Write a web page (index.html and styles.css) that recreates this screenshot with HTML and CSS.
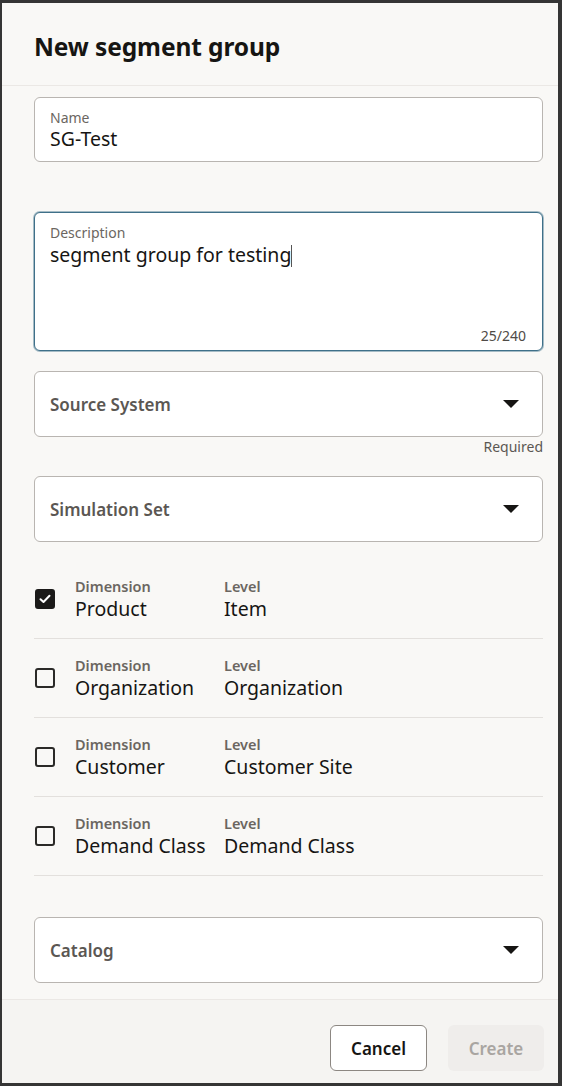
FILE: index.html
```html
<!DOCTYPE html>
<html>
<head>
  <meta charset="UTF-8">
  <link rel="stylesheet" href="styles.css">
</head>
<body>
  <div class="dialog">
    <div class="dialog-head">
      <h1 class="dialog-title">New segment group</h1>
    </div>

    <div class="dialog-body">
      <div class="field">
        <div class="field-label">Name</div>
        <div class="field-value">SG-Test</div>
      </div>

      <div class="field field-area">
        <div class="field-label">Description</div>
        <div class="field-value">segment group for testing<span class="caret"></span></div>
        <div class="counter">25/240</div>
      </div>

      <div class="select">
        <span class="select-text">Source System</span>
        <svg class="arrow" width="16" height="8" viewBox="0 0 16 8"><path d="M0 0 L16 0 L8 8 Z" fill="#161513"/></svg>
      </div>
      <div class="required">Required</div>

      <div class="select select-sim">
        <span class="select-text">Simulation Set</span>
        <svg class="arrow" width="16" height="8" viewBox="0 0 16 8"><path d="M0 0 L16 0 L8 8 Z" fill="#161513"/></svg>
      </div>

      <div class="dims">
        <div class="dim-row">
          <span class="check checked">
            <svg width="12" height="10" viewBox="0 0 12 10"><path d="M1.5 5.2 L4.5 8 L10.5 1.8" fill="none" stroke="#fff" stroke-width="2" stroke-linecap="round" stroke-linejoin="round"/></svg>
          </span>
          <div class="dim-col">
            <div class="dim-label">Dimension</div>
            <div class="dim-value">Product</div>
          </div>
          <div class="dim-col">
            <div class="dim-label">Level</div>
            <div class="dim-value">Item</div>
          </div>
        </div>
        <div class="dim-row">
          <span class="check"></span>
          <div class="dim-col">
            <div class="dim-label">Dimension</div>
            <div class="dim-value">Organization</div>
          </div>
          <div class="dim-col">
            <div class="dim-label">Level</div>
            <div class="dim-value">Organization</div>
          </div>
        </div>
        <div class="dim-row">
          <span class="check"></span>
          <div class="dim-col">
            <div class="dim-label">Dimension</div>
            <div class="dim-value">Customer</div>
          </div>
          <div class="dim-col">
            <div class="dim-label">Level</div>
            <div class="dim-value">Customer Site</div>
          </div>
        </div>
        <div class="dim-row">
          <span class="check"></span>
          <div class="dim-col">
            <div class="dim-label">Dimension</div>
            <div class="dim-value">Demand Class</div>
          </div>
          <div class="dim-col">
            <div class="dim-label">Level</div>
            <div class="dim-value">Demand Class</div>
          </div>
        </div>
      </div>

      <div class="select select-cat">
        <span class="select-text">Catalog</span>
        <svg class="arrow" width="16" height="8" viewBox="0 0 16 8"><path d="M0 0 L16 0 L8 8 Z" fill="#161513"/></svg>
      </div>
    </div>

    <div class="dialog-foot">
      <button class="btn btn-cancel">Cancel</button>
      <button class="btn btn-create">Create</button>
    </div>
  </div>
</body>
</html>
```

FILE: styles.css
```css
body{
  margin: 0;
  font-family: "Noto Sans", "Open Sans", sans-serif;
  color: #161513;
  background-color: #f9f8f6;
}
.dialog{
  box-sizing: border-box;
  width: 562px;
  height: 1086px;
  border-top: 3px solid #353535;
  border-left: 2px solid #353535;
  border-right: 4px solid #353535;
  border-bottom: 3px solid #353535;
  background-color: #f9f8f6;
  display: flex;
  flex-direction: column;
}
.dialog-head{
  height: 82px;
  border-bottom: 1px solid #ebe8e5;
  padding-left: 32px;
  display: flex;
  align-items: center;
}
.dialog-title{
  margin: 0;
  font-size: 24.5px;
  font-weight: bold;
  letter-spacing: -0.1px;
  padding-top: 4px;
}
.dialog-body{
  flex: 1;
  padding: 11px 15px 0 32px;
}
.field{
  box-sizing: border-box;
  height: 65px;
  background-color: #fff;
  border: 1px solid #b9b5b1;
  border-radius: 6px;
  padding: 11px 16px 0 15px;
}
.field-label{
  font-size: 14px;
  color: #6b6661;
  line-height: 18px;
}
.field-value{
  font-size: 19.5px;
  line-height: 24px;
  color: #161513;
}
.field-area{
  height: 139px;
  margin-top: 50px;
  border-color: #3f7089;
  box-shadow: 0 0 0 1px rgba(63, 112, 137, 0.45);
  position: relative;
  padding-top: 11px;
}
.field-area .field-value{
  margin-top: 1px;
}
.caret{
  display: inline-block;
  width: 1px;
  height: 22px;
  background-color: #555;
  vertical-align: -5px;
}
.counter{
  position: absolute;
  right: 16px;
  bottom: 5px;
  font-size: 14px;
  color: #4f4b47;
}
.select{
  box-sizing: border-box;
  height: 66px;
  margin-top: 20px;
  background-color: #fff;
  border: 1px solid #b9b5b1;
  border-radius: 6px;
  padding: 0 23px 0 15px;
  display: flex;
  align-items: center;
  justify-content: space-between;
}
.select-text{
  font-size: 17px;
  font-weight: 600;
  color: #5b5753;
}
.arrow{
  display: block;
}
.required{
  text-align: right;
  font-size: 14px;
  color: #5b5753;
  line-height: 20px;
}
.select-sim{
  margin-top: 19px;
}
.dims{
  margin-top: 18px;
}
.dim-row{
  height: 78px;
  border-bottom: 1px solid #e3e0dd;
  display: flex;
  align-items: center;
}
.check{
  box-sizing: border-box;
  width: 20px;
  height: 20px;
  border: 2px solid #2b2a28;
  border-radius: 3px;
  margin-left: 1px;
  margin-right: 20px;
  display: flex;
  align-items: center;
  justify-content: center;
}
.checked{
  background-color: #1b1a19;
  border-color: #1b1a19;
}
.dim-col{
  width: 149px;
}
.dim-label{
  font-size: 14.5px;
  font-weight: 600;
  color: #6b6661;
  line-height: 19px;
}
.dim-value{
  font-size: 19.5px;
  line-height: 26px;
  color: #161513;
}
.select-cat{
  margin-top: 41px;
}
.dialog-foot{
  height: 84px;
  border-top: 1px solid #ebe8e5;
  background-color: #f5f4f2;
  display: flex;
  justify-content: flex-end;
  align-items: flex-start;
  gap: 21px;
  padding: 25px 14px 0 0;
  box-sizing: border-box;
}
.btn{
  box-sizing: border-box;
  height: 46px;
  font-family: "Noto Sans", "Open Sans", sans-serif;
  font-size: 17px;
  font-weight: 600;
  border-radius: 6px;
}
.btn-cancel{
  width: 97px;
  background-color: #fff;
  border: 1px solid #8c8782;
  color: #161513;
}
.btn-create{
  width: 96px;
  background-color: #efedeb;
  border: none;
  color: #a9a5a1;
}
```
